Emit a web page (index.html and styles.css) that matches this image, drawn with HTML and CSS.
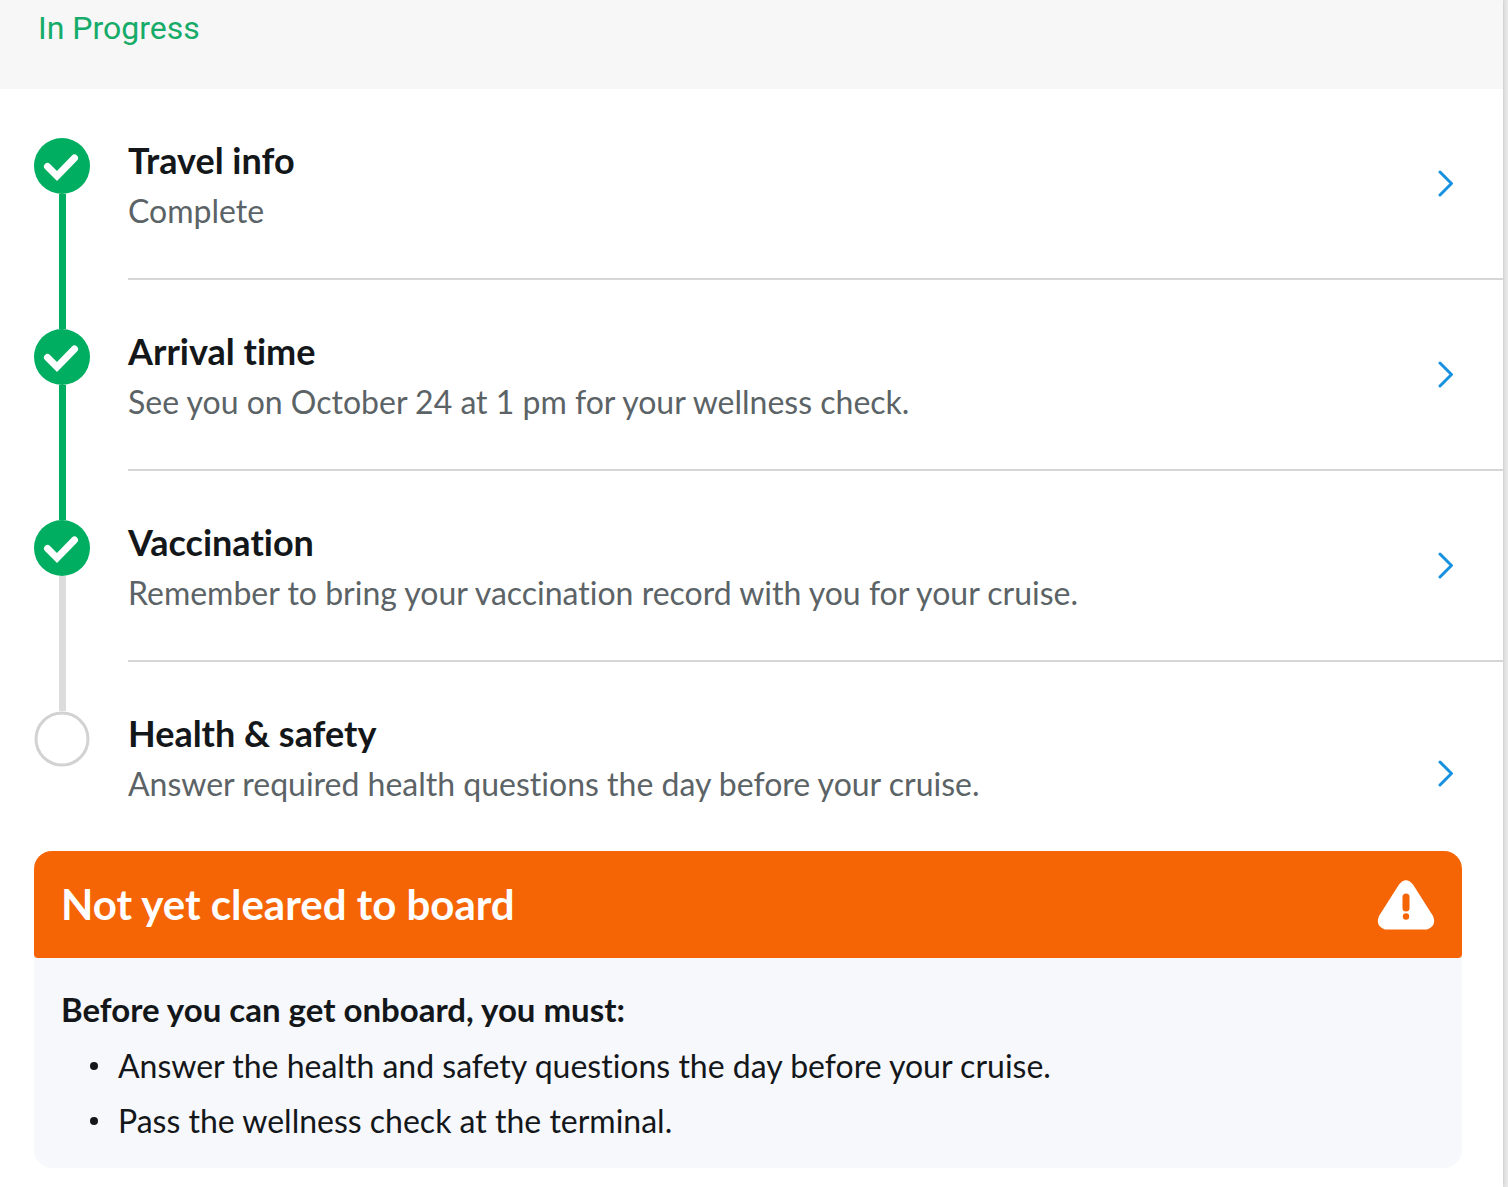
FILE: index.html
```html
<!DOCTYPE html>
<html lang="en">
<head>
  <meta charset="UTF-8">
  <meta name="viewport" content="width=device-width, initial-scale=1.0">
  <title>Check-in status</title>
  <link rel="stylesheet" href="styles.css">
</head>
<body>
  <main class="page">
    <header class="status">In Progress</header>

    <ol class="steps">
      <li class="step done">
        <div class="track">
          <svg class="dot" viewBox="0 0 56 56" aria-hidden="true"><circle cx="28" cy="28" r="28" fill="#00ae61"/><path d="M13.500 28.500L23 38L40.500 20" fill="none" stroke="#fff" stroke-width="7" stroke-linecap="round"/></svg>
          <span class="line"></span>
        </div>
        <a class="step-link" href="#travel">
          <div class="step-text">
            <h2>Travel info</h2>
            <p>Complete</p>
          </div>
          <svg class="chevron" viewBox="0 0 16 28" aria-hidden="true"><path d="M3 2l11.500 11.500L3 25"/></svg>
        </a>
      </li>
      <li class="step done">
        <div class="track">
          <svg class="dot" viewBox="0 0 56 56" aria-hidden="true"><circle cx="28" cy="28" r="28" fill="#00ae61"/><path d="M13.500 28.500L23 38L40.500 20" fill="none" stroke="#fff" stroke-width="7" stroke-linecap="round"/></svg>
          <span class="line"></span>
        </div>
        <a class="step-link" href="#arrival">
          <div class="step-text">
            <h2>Arrival time</h2>
            <p>See you on October 24 at 1 pm for your wellness check.</p>
          </div>
          <svg class="chevron" viewBox="0 0 16 28" aria-hidden="true"><path d="M3 2l11.500 11.500L3 25"/></svg>
        </a>
      </li>
      <li class="step">
        <div class="track">
          <svg class="dot" viewBox="0 0 56 56" aria-hidden="true"><circle cx="28" cy="28" r="28" fill="#00ae61"/><path d="M13.500 28.500L23 38L40.500 20" fill="none" stroke="#fff" stroke-width="7" stroke-linecap="round"/></svg>
          <span class="line"></span>
        </div>
        <a class="step-link" href="#vaccination">
          <div class="step-text">
            <h2>Vaccination</h2>
            <p>Remember to bring your vaccination record with you for your cruise.</p>
          </div>
          <svg class="chevron" viewBox="0 0 16 28" aria-hidden="true"><path d="M3 2l11.500 11.500L3 25"/></svg>
        </a>
      </li>
      <li class="step last">
        <div class="track">
          <svg class="dot" viewBox="0 0 56 56" aria-hidden="true"><circle cx="28" cy="28" r="26" fill="#fff" stroke="#d2d2d2" stroke-width="3"/></svg>
        </div>
        <a class="step-link" href="#health">
          <div class="step-text">
            <h2>Health &amp; safety</h2>
            <p>Answer required health questions the day before your cruise.</p>
          </div>
          <svg class="chevron" viewBox="0 0 16 28" aria-hidden="true"><path d="M3 2l11.500 11.500L3 25"/></svg>
        </a>
      </li>
    </ol>

    <section class="notice">
      <div class="notice-header">
        <h2>Not yet cleared to board</h2>
        <svg class="warning" viewBox="0 0 58 50" aria-hidden="true">
          <path d="M22 4.500Q29-4 36 4.500L56 36Q60 46 50 49.500H8Q-2 46 2 36Z" fill="#fff"/>
          <rect x="25.500" y="13.500" width="7" height="18" rx="3.500" fill="#f56506"/>
          <circle cx="29" cy="36.500" r="3.200" fill="#f56506"/>
        </svg>
      </div>
      <div class="notice-body">
        <h3>Before you can get onboard, you must:</h3>
        <ul>
          <li>Answer the health and safety questions the day before your cruise.</li>
          <li>Pass the wellness check at the terminal.</li>
        </ul>
      </div>
    </section>
  </main>
</body>
</html>
```
FILE: styles.css
```css
* {
  box-sizing: border-box;
}
body {
  margin: 0;
  padding-right: 5px;
  background: #e8e8e8;
  color: #14171a;
  font-family: Lato, "Liberation Sans", sans-serif;
  font-variant-ligatures: none;
}
h2, h3, p, ol, ul {
  margin: 0;
  padding: 0;
}
ol, ul {
  list-style: none;
}
.page {
  min-height: 100vh;
  background: #fff;
  box-shadow: 0 0 4px rgba(0, 0, 0, 0.2);
}
.status {
  padding: 8px 38px 41px;
  background: #f7f7f7;
  color: #15ab68;
  font-family: Roboto, sans-serif;
  font-size: 32px;
  line-height: 40px;
}
.steps {
  padding: 49px 0 0 34px;
}
.step {
  display: flex;
  gap: 38px;
}
.track {
  display: flex;
  flex-direction: column;
  align-items: center;
}
.dot {
  display: block;
  width: 56px;
  height: 56px;
}
.line {
  flex: 1;
  width: 7px;
  background: #dcdcdc;
}
.done .line {
  background: #00ae61;
}
.step-link {
  flex: 1;
  display: flex;
  align-items: flex-start;
  justify-content: space-between;
  margin-bottom: 49px;
  padding: 0 50px 38px 0;
  border-bottom: 2px solid #d6d6d6;
  color: inherit;
  text-decoration: none;
}
.step-text h2 {
  font-size: 36px;
  font-weight: bold;
  line-height: 44px;
}
.step-text p {
  color: #5b6366;
  font-size: 32px;
  line-height: 58px;
}
.chevron {
  flex: none;
  width: 16px;
  height: 28px;
  margin-top: 32px;
  fill: none;
  stroke: #1591e0;
  stroke-width: 3;
  stroke-linecap: round;
}
.last .step-link {
  margin-bottom: 0;
  border-bottom: 0;
}
.last .chevron {
  margin-top: 49px;
}
.notice {
  margin: 0 41px 0 34px;
  border-radius: 18px;
  background: #f7f8fc;
}
.notice-header {
  display: flex;
  align-items: center;
  justify-content: space-between;
  padding: 28px 27px;
  border-radius: 18px 18px 4px 4px;
  background: #f56506;
  color: #fff;
}
.notice-header h2 {
  font-size: 42px;
  line-height: 51px;
}
.warning {
  width: 58px;
  height: 50px;
}
.notice-body {
  padding: 28px 27px 20px;
}
.notice-body h3 {
  padding-bottom: 6px;
  font-size: 33px;
  line-height: 46px;
}
.notice-body li {
  display: flex;
  align-items: center;
  gap: 20px;
  padding-left: 29px;
  font-size: 32px;
  line-height: 55px;
}
.notice-body li::before {
  content: "";
  width: 8px;
  height: 8px;
  border-radius: 50%;
  background: #14171a;
}
```
